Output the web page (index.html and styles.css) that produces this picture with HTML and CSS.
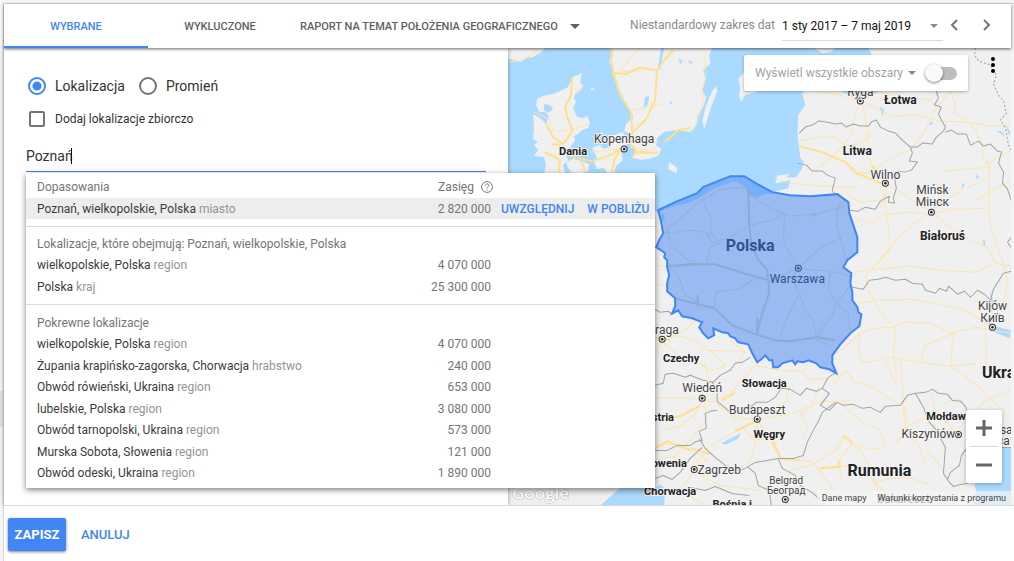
FILE: index.html
```html
<!DOCTYPE html>
<html lang="pl">

<head>
    <meta charset="UTF-8">
    <meta name="viewport" content="width=device-width, initial-scale=1.0">
    <title>Lokalizacje</title>
    <link rel="stylesheet" href="styles.css">
</head>

<body>
    <div class="side-handle"></div>
    <div class="page">
        <header class="toolbar">
            <nav class="tabs">
                <button class="tab active" type="button">WYBRANE</button>
                <button class="tab" type="button">WYKLUCZONE</button>
                <button class="tab tab-report" type="button">RAPORT NA TEMAT POŁOŻENIA GEOGRAFICZNEGO <span class="arrow"></span></button>
            </nav>
            <div class="date-range">
                <label for="range">Niestandardowy zakres dat</label>
                <div class="select-wrap date-select">
                    <select id="range">
                        <option>1 sty 2017 – 7 maj 2019</option>
                    </select>
                    <span class="arrow"></span>
                </div>
                <button class="icon-btn" type="button" aria-label="Wstecz">
                    <svg width="16" height="16" viewBox="0 0 16 16"><path d="M10 3L5 8l5 5" /></svg>
                </button>
                <button class="icon-btn" type="button" aria-label="Dalej">
                    <svg width="16" height="16" viewBox="0 0 16 16"><path d="M6 3l5 5-5 5" /></svg>
                </button>
            </div>
        </header>

        <main class="workspace">
            <form class="search-pane">
                <div class="mode-group">
                    <label class="mode"><input type="radio" name="mode" checked> Lokalizacja</label>
                    <label class="mode"><input type="radio" name="mode"> Promień</label>
                </div>
                <label class="bulk"><input type="checkbox"> Dodaj lokalizacje zbiorczo</label>

                <div class="search-field">
                    <input type="text" id="search" value="Poznań" aria-label="Lokalizacja">
                    <span class="caret"></span>

                    <div class="suggestions">
                        <table class="matches first">
                            <colgroup><col class="col-name"><col class="col-reach"><col></colgroup>
                            <tr class="heading">
                                <th class="name">Dopasowania</th>
                                <th class="reach reach-title">Zasięg
                                    <svg class="help" width="12" height="12" viewBox="0 0 12 12"><circle cx="6" cy="6" r="5.4" /><path d="M4.3 4.8C4.3 2.3 7.8 2.4 7.8 4.5 7.8 5.8 6 5.8 6 7.2M6 8.3v1.1" /></svg>
                                </th>
                                <th></th>
                            </tr>
                            <tr class="selected">
                                <td class="name">Poznań, wielkopolskie, Polska <span>miasto</span></td>
                                <td class="reach">2 820 000</td>
                                <td class="actions"><button type="button">UWZGLĘDNIJ</button><button type="button">W POBLIŻU</button></td>
                            </tr>
                        </table>
                        <table class="matches parents">
                            <colgroup><col class="col-name"><col class="col-reach"><col></colgroup>
                            <tr class="heading">
                                <th class="name" colspan="3">Lokalizacje, które obejmują: Poznań, wielkopolskie, Polska</th>
                            </tr>
                            <tr>
                                <td class="name">wielkopolskie, Polska <span>region</span></td>
                                <td class="reach">4 070 000</td>
                                <td></td>
                            </tr>
                            <tr>
                                <td class="name">Polska <span>kraj</span></td>
                                <td class="reach">25 300 000</td>
                                <td></td>
                            </tr>
                        </table>
                        <table class="matches related">
                            <colgroup><col class="col-name"><col class="col-reach"><col></colgroup>
                            <tr class="heading">
                                <th class="name" colspan="3">Pokrewne lokalizacje</th>
                            </tr>
                            <tr>
                                <td class="name">wielkopolskie, Polska <span>region</span></td>
                                <td class="reach">4 070 000</td>
                                <td></td>
                            </tr>
                            <tr>
                                <td class="name">Żupania krapińsko-zagorska, Chorwacja <span>hrabstwo</span></td>
                                <td class="reach">240 000</td>
                                <td></td>
                            </tr>
                            <tr>
                                <td class="name">Obwód rówieński, Ukraina <span>region</span></td>
                                <td class="reach">653 000</td>
                                <td></td>
                            </tr>
                            <tr>
                                <td class="name">lubelskie, Polska <span>region</span></td>
                                <td class="reach">3 080 000</td>
                                <td></td>
                            </tr>
                            <tr>
                                <td class="name">Obwód tarnopolski, Ukraina <span>region</span></td>
                                <td class="reach">573 000</td>
                                <td></td>
                            </tr>
                            <tr>
                                <td class="name">Murska Sobota, Słowenia <span>region</span></td>
                                <td class="reach">121 000</td>
                                <td></td>
                            </tr>
                            <tr>
                                <td class="name">Obwód odeski, Ukraina <span>region</span></td>
                                <td class="reach">1 890 000</td>
                                <td></td>
                            </tr>
                        </table>
                    </div>
                </div>
            </form>

            <section class="map">
                <svg class="map-canvas" viewBox="508 48 503 457" preserveAspectRatio="xMinYMin slice">
                    <!-- land -->
                    <g class="land">
                        <path d="M508 48H545L540 53 533 57 527 58 520 62 515 60 508 59Z" />
                        <path d="M582 73L580 82 583 86 580 91 575 94 574 98 576 102 573 108 577 117 584 118 587 116 590 123 588 128 582 130 578 134 574 136 575 141 570 147 566 155 568 160 563 165 565 173H544L546 165 544 157 534 156 538 150 534 145 538 142 533 139 534 129 533 114 540 118 546 124 549 116 545 112 539 112 536 105 537 99 543 96 553 94 560 91 568 87 573 77Z" />
                        <path d="M566 162L573 159 582 161 589 164 588 171 583 173H572L568 168Z" />
                        <path d="M592 148L600 145 603 149 610 147 608 139 615 135 622 132 627 138 626 148 621 153 623 160 616 166 614 173H607L604 168 597 169 594 162 597 158Z" />
                        <path d="M609 48L613 55 609 61 613 69 612 74 617 85 621 93 626 104 631 111 633 118 626 124 624 131 629 133 633 140 630 147 636 150 632 158 641 160 652 158 659 155 661 149 656 145 657 138 664 132 676 130 690 132 697 124 697 116 703 107 706 98 702 90 705 79 703 70 710 64 709 55 712 48Z" />
                        <path d="M716 86L717 91 711 107 704 129 702 121 706 105 712 91Z" />
                        <path d="M669 162L677 168 676 173 668 169Z" />
                        <path d="M590 89l6-2-4 4zM744 72L738 79 740 88 739 96 741 102 745 95 756 92V70ZM815 49L822 53 830 52 835 48H815Z" />
                        <path d="M868 48L871 54 869 60 878 92 866 96 860 100 852 97 843 92 830 83 808 86 802 93 805 105 798 115 797 132 800 158 797 166 791 174 777 175 775 183 790 180 788 188 776 191 772 194 765 193 755 198 748 195 744 186 735 181 716 187 703 195 690 202 673 206 658 212 650 208V173H508V505H1011V48Z" />
                    </g>
                    <g class="sea">
                        <path d="M640 486L655 488 660 484 665 488 664 505 600 505 622 486ZM1011 447H1000L995 461 983 475 974 484 976 491 972 498 974 505H1011Z" />
                        <path d="M721 443L730 438 740 433 738 438 726 444ZM544 104l6 1 3 4-5 4-4-3zM800 158l4 4-3 8-5 7-10 0 9-8zM645 97l4-1-1 8-5 6zM678 59l5 2-3 3zM669 103l3-2v4zM688 60l5 2-3 2zM611 48h-5l3 6zM661 48h3l-4 22-2-3zM879 106l5 4-2 6zM928 124l4-3v4zM976 174l3 3-3 2zM962 182l2 3-3 4zM995 130l7 2 3 5zM982 239l3 2-1 6zM986 318l7 8 18 4-2 8-20-8zM990 290l3 12-2 10zM1005 125l5 7-1 4z" />
                    </g>

                    <!-- minor roads -->
                    <g class="roads">
                        <path d="M508 62L518 61 528 57 540 49M534 112L549 119 553 130 562 131 575 129 589 124M544 155H570L585 152M590 152L604 151 620 149M633 154L642 154 658 152M656 148L645 151 634 147M633 110L648 107 662 104M613 73L630 71 640 67 658 70M618 74L631 57 639 48M705 52V78L702 90 704 99 698 118 693 131M632 137L655 137M575 93L583 86M627 138L640 145 658 142" />
                        <path d="M800 141L818 137 835 137 844 145 858 144 870 136 862 133M816 170L830 158 844 145 851 133 853 123 860 100M862 101L866 125 869 133 864 150 872 166 882 173M861 174L880 165 898 155 912 149 925 130 934 112 945 97 951 91M862 101L880 111 892 116 916 115 940 121 965 122 990 126 1011 125M950 91L955 105 953 112 967 121 976 132 981 144 983 158 989 165 988 205 990 225 997 247 1002 260 1007 280 1005 295 998 316 992 327" />
                        <path d="M776 178L788 183 812 185 838 187 856 187M856 172L874 173 886 183 885 197 881 207M843 187L850 197 860 202 884 199M855 219L870 223 884 214 912 212 929 214 950 209 985 208M885 182L905 195 918 205 931 211 950 228 970 240 986 246 995 263 1011 266M883 188L888 225 890 250 878 262 865 275 868 290 875 303 886 320 895 327 893 355 897 378M931 211L912 225 896 240 879 260M854 272L875 269 910 266 940 270 975 272 990 265M856 303L880 300 910 299 935 303 965 310 990 326M895 326L905 322 930 323 950 333 975 327 1011 333M858 333L875 328 895 327M832 356L850 342 860 333 858 350 862 363 890 357 920 362 950 366 975 363M920 362L925 345 953 333 950 366 970 380 985 393 1003 410M985 328L986 370M975 200L1011 180M940 91L930 100 900 97 880 92M765 91L773 86M983 165L1011 150M932 210L960 190 985 180M820 91L840 95 857 101M943 171L990 167" />
                        <path d="M656 231L670 225M656 265L670 267M656 284L670 286M656 322L664 335 680 336 695 340 710 350 726 366 710 370 697 362 680 358M663 337L656 352M665 340L685 330 695 320M663 342L682 358 705 365 708 376 715 400M700 350L745 351M730 340L745 352 735 365M655 398L675 397 697 399 712 402 730 393 755 365 780 370 803 371 808 379 830 378M703 399L694 415 680 426 662 430M704 400L707 418 690 440 675 456 655 459M656 445L678 443 690 449 707 459 692 470 720 485 760 490M716 402L722 409 740 418 757 419 790 414 810 405 825 400M757 419L773 445 780 458 812 461 830 485 845 505M757 419L756 440 750 462 740 467M757 419L735 431 707 448 692 470M800 410L807 425 803 440M720 402L735 420M694 470L680 490 705 505M740 425L755 440 775 436M790 385L785 402 765 410M819 385L812 405 800 415" />
                        <path d="M785 484L790 470 815 463 835 450 845 435 850 442 870 449 885 447 880 430 860 420 842 405M820 467L845 465 865 472 885 493M852 442L838 462 842 481M854 445L862 452 870 470 878 490M832 385L845 370 855 382 873 387 885 396 900 405M900 357L903 405 908 425 895 445M903 408L905 430 918 445 925 462M908 425L925 418 940 430 955 433 965 420 985 400 1011 390M930 392L935 410 945 420 955 432M943 403L960 398 966 412M926 450L940 465 946 475M870 483L890 478 910 477 930 485M820 401H850M885 362L897 385" />
                    </g>
                    <!-- main roads -->
                    <g class="roads roads-main">
                        <path d="M572 77L571 95 565 107 568 120 573 130 563 144 553 137 546 124M552 144L560 145M559 172L560 160 545 152M560 148L573 157 592 161 610 155 620 149M632 158L636 150 630 143 632 135 631 112 620 95 614 75 611 60 612 48M614 73L625 74 640 68 657 70 664 60 673 50M657 70L655 100 646 119 633 132M612 173L614 160 620 150M665 142L678 130 690 128M581 160L585 171M635 152L658 153" />
                        <path d="M799 146L822 152 845 162 856 173 883 184M857 101L868 96M872 165L877 178M673 266L700 264M655 337L670 340M722 400L735 392M655 419L680 416 700 405M692 448L710 454M842 435L852 442M820 468L840 466 838 460M757 420L735 431M770 435L780 457M780 458L800 460M655 448L667 441 690 450" />
                    </g>

                    <!-- borders -->
                    <g class="borders">
                        <path d="M799 133L805 127 812 125 818 121 826 122 835 124 841 123 846 127 853 124 860 126 868 126 871 122 876 120 880 127 888 131 895 133 903 141 910 147 917 147 922 143 932 144 936 137 943 131 945 127 941 120 938 114 941 107 934 105 938 98 936 91" />
                        <path d="M945 132L951 130 957 134 966 134 970 145 978 141 983 146 990 144 997 151 1001 152 998 163 1003 172 1002 183 1007 189 1011 201M910 147L912 153 909 161 917 162 911 170 904 172 898 171 894 178 896 188 893 198 894 203 888 202 889 196 880 201 875 209 865 207 858 211 849 210M797 163L806 165 812 171 822 171 827 175 835 178 832 190 834 194" />
                        <path d="M852 287L863 289 869 280 878 279 885 277 895 280 905 279 912 283 922 284 925 290 935 293 939 288 946 291 948 286 957 294 964 291 970 297 977 290 984 294 990 300 993 289 998 281 1003 273 1011 271M1011 237L1007 242 1011 248" />
                        <path d="M655 309L660 312 668 311 672 314 678 310M655 385L663 383 665 374 673 373 685 377 690 375 703 380 713 382 720 375 730 370 735 363 742 362 750 357M712 382L717 391 717 401 729 411 740 407 751 406 756 402 767 402 775 397 781 388 790 389 800 395 806 388 816 391 822 388 828 377 836 372" />
                        <path d="M717 410L710 411 705 413 706 428 699 431 702 440 696 441 690 445 677 445 667 450 655 450M699 438L705 448 715 457 725 465 738 470 745 468 755 462 767 460 778 458 793 458 803 455 807 442 813 430 819 419 822 412 835 402M655 478L663 475 672 479 680 472 685 465 690 458 702 447M748 467L755 473 758 485 769 490 771 505M690 487L705 490 715 486 732 493 749 495M778 458L782 468 795 475 800 485 813 493 820 500M822 388L829 393 820 405 829 410 837 402 843 405 853 404 862 408 870 407 880 412 885 406 900 405 907 395 915 393 925 392 932 389 938 393 947 394 952 400 960 401 965 406 967 412" />
                        <path d="M915 393L923 407 929 422 936 430 945 447 943 473 949 482 953 486 960 484 967 483M1011 447H1002L966 448 961 455 959 465 950 472 947 479" />
                        <path class="dashed" d="M975 48L974 55 978 61 990 65 996 75 993 84 998 95 1003 101 1006 113 1000 120 1005 128 1008 145 1011 150" />
                    </g>

                    <!-- Poland, selected area -->
                    <path class="inner-sea" d="M658 210L675 202 697 193 703 187 730 176 744 176 757 184 772 193 765 194 755 197 749 194 745 186 735 181 716 187 703 195 690 202 673 206ZM659 214h4l2 5-3 2zM812 214h5l-2 3z" />
                    <g class="roads roads-poland">
                        <path d="M664 234L672 225 698 203 720 189 745 187 748 193 765 205 775 210 790 216 820 213 845 205M704 204L711 220 710 232 720 243 710 247 706 264M665 233L690 230 706 232 712 243 730 237 748 226 775 219 785 213M785 215L783 232 784 243 797 268 780 276 768 282M798 268L820 248 840 238 836 225 838 205 845 200M797 268L830 271 852 276M840 238L846 260M797 268L793 280 799 295 790 310 780 335M800 295L805 310 813 320 817 340 830 345M669 265L680 280 685 295 695 300 699 310M714 307L716 292 740 288 755 278 768 280M830 272L828 290 836 303 832 315 820 330 817 340M850 285L836 303M668 232L670 245 690 262M835 303L848 313 850 330" />
                        <path class="wide" d="M748 188L749 225 751 243 757 258 767 270 769 292 760 320 757 333M668 266L690 264 715 264 740 272 768 280M675 298L690 302 714 308 732 325 752 333 775 340 790 341 817 337 835 340M697 295L698 303M757 317V333" />
                    </g>
                    <path class="area" d="M658 210L675 202 697 193 703 187 730 176 744 176 757 184 772 192 790 195 810 196 837 194 848 202 849 213 853 225 857 237 857 252 847 260 843 267 851 273 850 283 852 292 852 300 857 307 858 312 861 314 859 326 850 333 840 344 832 355 832 363 836 373 829 369 820 367 816 363 808 360 803 362 797 361 795 364 792 360 782 363 778 367 773 367 772 360 769 360 765 355 761 359 757 362 752 353 748 344 738 342 735 338 730 336 728 333 722 332 713 328 714 335 708 338 703 333 699 327 702 322 692 318 682 316 678 310 672 313 675 306 675 298 667 291 667 283 669 275 667 267 667 260 664 257 665 253 656 247 659 240 663 233 661 222Z" />

                    <!-- city pins -->
                    <g class="pins">
                        <circle cx="624" cy="149" r="3" /><circle cx="860" cy="101" r="3" />
                        <circle cx="885" cy="183" r="3" /><circle cx="931" cy="212" r="3" />
                        <circle cx="662" cy="339" r="3" /><circle cx="702" cy="398" r="3" />
                        <circle cx="757" cy="419" r="3" /><circle cx="694" cy="469" r="3" />
                        <circle cx="785" cy="499" r="3" /><circle cx="992" cy="327" r="3" />
                        <circle cx="958" cy="434" r="3" /><circle class="blue" cx="798" cy="268" r="3" />
                    </g>
                    <g class="pin-dots">
                        <circle cx="624" cy="149" r="1.3" /><circle cx="860" cy="101" r="1.3" />
                        <circle cx="885" cy="183" r="1.3" /><circle cx="931" cy="212" r="1.3" />
                        <circle cx="662" cy="339" r="1.3" /><circle cx="702" cy="398" r="1.3" />
                        <circle cx="757" cy="419" r="1.3" /><circle cx="694" cy="469" r="1.3" />
                        <circle cx="785" cy="499" r="1.3" /><circle cx="992" cy="327" r="1.3" />
                        <circle cx="958" cy="434" r="1.3" /><circle class="blue" cx="798" cy="268" r="1.3" />
                    </g>

                    <!-- cities -->
                    <g class="city">
                        <text x="624" y="143">Kopenhaga</text>
                        <text x="860" y="96">Ryga</text>
                        <text x="885" y="179">Wilno</text>
                        <text x="932" y="194">Mińsk</text>
                        <text x="932" y="206">Мінск</text>
                        <text x="992" y="310">Kijów</text>
                        <text x="992" y="322">Київ</text>
                        <text x="663" y="334">Praga</text>
                        <text x="702" y="392">Wiedeń</text>
                        <text x="757" y="414">Budapeszt</text>
                        <text x="719" y="474">Zagrzeb</text>
                        <text class="small" x="786" y="484">Belgrad</text>
                        <text class="small" x="786" y="494">Београд</text>
                        <text x="928" y="438">Kiszyniów</text>
                        <text x="903" y="503">Bukareszt</text>
                        <text x="992" y="434">Odessa</text>
                        <text x="992" y="445">Одеса</text>
                        <text class="blue" x="797" y="283">Warszawa</text>
                    </g>

                    <!-- countries -->
                    <g class="country">
                        <text x="573" y="155">Dania</text>
                        <text class="medium" x="900" y="104">Łotwa</text>
                        <text class="medium" x="857" y="155">Litwa</text>
                        <text class="medium" x="942" y="240">Białoruś</text>
                        <text x="681" y="362">Czechy</text>
                        <text x="764" y="387">Słowacja</text>
                        <text x="769" y="438">Węgry</text>
                        <text x="656" y="421">Austria</text>
                        <text x="664" y="467">Słowenia</text>
                        <text x="670" y="495">Chorwacja</text>
                        <text x="732" y="508">Bośnia i</text>
                        <text x="950" y="420">Mołdawia</text>
                        <text class="big blue" x="750" y="251">Polska</text>
                        <text class="big" x="879" y="476">Rumunia</text>
                        <text class="big" x="1009" y="378">Ukraina</text>
                    </g>
                    <text class="logo" x="512" y="499">Google</text>
                </svg>

                <div class="area-filter">
                    <div class="select-wrap">
                        <select id="areas" aria-label="Obszary">
                            <option>Wyświetl wszystkie obszary</option>
                        </select>
                        <span class="arrow"></span>
                    </div>
                    <input class="switch" type="checkbox" aria-label="Pokaż obszary">
                </div>

                <button class="more" type="button" aria-label="Więcej"><i></i><i></i><i></i></button>

                <div class="zoom">
                    <button type="button" aria-label="Powiększ">
                        <svg width="18" height="18" viewBox="0 0 18 18"><path d="M1 9h16M9 1v16" /></svg>
                    </button>
                    <button type="button" aria-label="Pomniejsz">
                        <svg width="18" height="18" viewBox="0 0 18 18"><path d="M1 9h16" /></svg>
                    </button>
                </div>

                <div class="credits">
                    <a href="#">Dane mapy</a>
                    <a href="#">Warunki korzystania z programu</a>
                </div>
            </section>
        </main>

        <footer class="form-actions">
            <button class="save" type="button">ZAPISZ</button>
            <button class="cancel" type="button">ANULUJ</button>
        </footer>
    </div>
</body>

</html>
```
FILE: styles.css
```css
* {
    box-sizing: border-box;
}

body {
    margin: 0;
    min-height: 100vh;
    padding: 3px 0 0 3px;
    display: flex;
    font-family: Roboto, 'Liberation Sans', sans-serif;
    font-size: 12px;
    color: #333;
    background: #f4f4f4;
}

button,
input,
select {
    margin: 0;
    padding: 0;
    border: none;
    background: none;
    font-family: inherit;
    color: inherit;
}

button {
    cursor: pointer;
}

.side-handle {
    position: absolute;
    left: 0;
    top: 391px;
    width: 3px;
    height: 36px;
    background: #e0e0e0;
}

.page {
    flex: 1;
    display: flex;
    flex-direction: column;
    border-top: 1px solid #d8d8d8;
    border-left: 1px solid #d8d8d8;
}

.arrow {
    display: inline-block;
    border: 5px solid transparent;
    border-top-color: #616161;
    border-bottom: none;
}

/* toolbar */
.toolbar {
    position: relative;
    z-index: 2;
    display: flex;
    justify-content: space-between;
    height: 44px;
    margin-right: 3px;
    background: #fff;
    box-shadow: 0 1px 3px rgba(0, 0, 0, 0.6);
}

.tabs {
    display: flex;
}

.tab {
    width: 144px;
    padding-top: 2px;
    border-bottom: 2px solid transparent;
    font-size: 11px;
    font-weight: 500;
    color: #616161;
}

.tab.active {
    color: #4285f4;
    border-color: #4285f4;
}

.tab-report {
    width: auto;
    padding-left: 8px;
    display: flex;
    align-items: center;
    gap: 12px;
    white-space: nowrap;
}

.date-range {
    display: flex;
    align-items: center;
    padding: 0 17px 2px 0;
    color: #8a8a8a;
}

.select-wrap {
    display: flex;
    align-items: center;
}

.select-wrap select {
    appearance: none;
    font-size: 12px;
    outline: none;
}

.date-select {
    width: 161px;
    height: 30px;
    margin: 2px 4px 0 7px;
    justify-content: space-between;
    padding-right: 5px;
    border-bottom: 1px solid #dadada;
}

.date-select select {
    color: #111;
}

.icon-btn {
    width: 16px;
    height: 16px;
}

.icon-btn + .icon-btn {
    margin-left: 15px;
}

.icon-btn svg {
    display: block;
    fill: none;
    stroke: #757575;
    stroke-width: 2;
}

/* search pane */
.workspace {
    flex: 1;
    display: grid;
    grid-template-columns: 1fr 1fr;
    min-height: 457px;
    margin-right: 3px;
}

.search-pane {
    position: relative;
    z-index: 1;
    padding: 28px 22px 0;
    background: #fff;
    box-shadow: 0 0 4px rgba(0, 0, 0, 0.4);
}

.mode-group {
    display: flex;
    gap: 14px;
    padding-left: 2px;
}

.mode,
.bulk {
    display: flex;
    align-items: center;
}

.mode {
    gap: 9px;
    height: 19px;
    font-size: 14px;
}

.mode input {
    appearance: none;
    width: 18px;
    height: 18px;
    border: 2px solid #757575;
    border-radius: 50%;
}

.mode input:checked {
    border-color: #4285f4;
    background: radial-gradient(circle, #4285f4 4px, transparent 5px);
}

.bulk {
    gap: 10px;
    height: 16px;
    margin-top: 16px;
    padding-left: 3px;
}

.bulk input {
    appearance: none;
    width: 16px;
    height: 16px;
    border: 2px solid #757575;
    border-radius: 2px;
}

.search-field {
    position: relative;
    margin-top: 17px;
}

.search-field > input {
    display: block;
    width: 100%;
    height: 28px;
    padding-bottom: 4px;
    border-bottom: 1px solid #4285f4;
    font-size: 14px;
    outline: none;
}

.caret {
    position: absolute;
    left: 45px;
    top: 4px;
    width: 1px;
    height: 16px;
    background: #000;
}

/* suggestions */
.suggestions {
    position: absolute;
    top: 29px;
    left: 0;
    width: 629px;
    background: #fff;
    box-shadow: 0 2px 6px rgba(0, 0, 0, 0.5);
}

.matches {
    width: 100%;
    table-layout: fixed;
    border-collapse: collapse;
    line-height: 20px;
    color: #757575;
}

.col-name {
    width: 380px;
}

.col-reach {
    width: 85px;
}

.matches th,
.matches td {
    padding: 0;
    font-weight: 400;
    text-align: left;
}

.matches .name {
    padding-left: 11px;
}

.matches td.name {
    color: #3c3c3c;
}

.matches td.name span {
    color: #949494;
}

.matches .reach {
    text-align: right;
}

.matches .reach-title {
    padding-left: 32px;
    text-align: left;
    white-space: nowrap;
}

.first .heading {
    height: 25px;
}

.first .heading th {
    padding-top: 2px;
}

.first .selected {
    height: 21px;
    background: #ededed;
}

.help {
    margin-left: 4px;
    vertical-align: -2px;
    fill: none;
    stroke: #757575;
}

.actions button {
    margin-left: 10px;
    font-size: 12px;
    font-weight: 500;
    line-height: 20px;
    color: #4285f4;
}

.actions button + button {
    margin-left: 13px;
}

.parents,
.related {
    border-collapse: separate;
    border-spacing: 0;
    border-top: 1px solid #dadada;
}

.parents {
    height: 78px;
    margin-top: 7px;
    padding: 6px 0;
}

.related {
    height: 184px;
    padding: 7px 0 4px;
}

/* map */
.map {
    position: relative;
    overflow: hidden;
    background: #aadaff;
}

.map-canvas {
    position: absolute;
    width: 100%;
    height: 100%;
}

.land {
    fill: #f0f0f0;
}

.sea,
.inner-sea {
    fill: #aadaff;
}

.roads {
    fill: none;
    stroke: #fbe5ae;
    stroke-linejoin: round;
}

.roads-main {
    stroke: #ffe08a;
    stroke-width: 2;
}

.roads-poland {
    stroke: #e0d8c0;
}

.roads-poland .wide {
    stroke: #d4ceb8;
    stroke-width: 2;
}

.borders {
    fill: none;
    stroke: #a3a3a3;
    stroke-linejoin: round;
}

.dashed {
    stroke-dasharray: 2 2;
}

.area {
    fill: #4285f4;
    fill-opacity: 0.5;
    stroke: #4285f4;
    stroke-width: 2;
}

.pins {
    fill: #f0f0f0;
    stroke: #333;
}

.pins .blue {
    fill: #98baf1;
    stroke: #33528c;
}

.pin-dots {
    fill: #222;
}

.pin-dots .blue {
    fill: #33528c;
}

.city,
.country {
    font-size: 12px;
    text-anchor: middle;
    fill: #444;
    stroke: #f4f4f4;
    stroke-width: 2;
    paint-order: stroke;
}

.city .small {
    font-size: 10px;
}

.country {
    font-size: 11px;
    font-weight: 700;
    fill: #222;
}

.country .medium {
    font-size: 12px;
}

.country .big {
    font-size: 16px;
}

.city .blue,
.country .blue {
    fill: #33528c;
    stroke: none;
}

.logo {
    font-family: 'Open Sans', Roboto, sans-serif;
    font-size: 17px;
    font-weight: 600;
    fill: #fff;
    stroke: #b4b4b4;
    stroke-width: 1;
    paint-order: stroke;
}

.area-filter {
    position: absolute;
    top: 7px;
    right: 43px;
    width: 224px;
    height: 36px;
    padding: 0 11px;
    display: flex;
    align-items: center;
    justify-content: space-between;
    border-radius: 2px;
    background: #fff;
    box-shadow: 0 1px 3px rgba(0, 0, 0, 0.3);
    color: #a3a3a3;
}

.area-filter .select-wrap {
    gap: 4px;
}

.area-filter .arrow,
.date-select .arrow {
    border-width: 4px;
    border-bottom: none;
    border-top-color: #8a8a8a;
}

.switch {
    appearance: none;
    position: relative;
    width: 31px;
    height: 13px;
    border-radius: 7px;
    background: #bdbdbd;
}

.switch::before {
    content: '';
    position: absolute;
    left: -1px;
    top: -3px;
    width: 18px;
    height: 18px;
    border-radius: 50%;
    background: #fafafa;
    box-shadow: 0 1px 3px rgba(0, 0, 0, 0.5);
}

.more {
    position: absolute;
    top: 9px;
    right: 16px;
    display: flex;
    flex-direction: column;
    gap: 2px;
}

.more i {
    width: 4px;
    height: 4px;
    border-radius: 50%;
    background: #000;
}

.zoom {
    position: absolute;
    right: 9px;
    bottom: 22px;
    width: 36px;
    display: flex;
    flex-direction: column;
    padding: 0 4px;
    border-radius: 2px;
    background: #fff;
    box-shadow: 0 1px 4px rgba(0, 0, 0, 0.3);
}

.zoom button {
    display: flex;
    align-items: center;
    justify-content: center;
    height: 36px;
}

.zoom button + button {
    height: 37px;
    border-top: 1px solid #dadada;
}

.zoom path {
    stroke: #666;
    stroke-width: 3;
}

.credits {
    position: absolute;
    right: 0;
    bottom: 0;
    display: flex;
    gap: 11px;
    padding: 0 5px;
    font-size: 9px;
    line-height: 14px;
    background: rgba(245, 245, 245, 0.7);
}

.credits a {
    color: #444;
    text-decoration: none;
}

/* footer */
.form-actions {
    position: relative;
    z-index: 1;
    display: flex;
    gap: 15px;
    padding: 12px 4px 10px;
    border-top: 1px solid #dadada;
    background: #fff;
}

.form-actions button {
    height: 33px;
    font-size: 13px;
    font-weight: 500;
    color: #4285f4;
}

.form-actions .save {
    width: 58px;
    border-radius: 2px;
    font-weight: 700;
    color: #fff;
    background: #4285f4;
    box-shadow: 0 1px 3px rgba(0, 0, 0, 0.5);
}
```
